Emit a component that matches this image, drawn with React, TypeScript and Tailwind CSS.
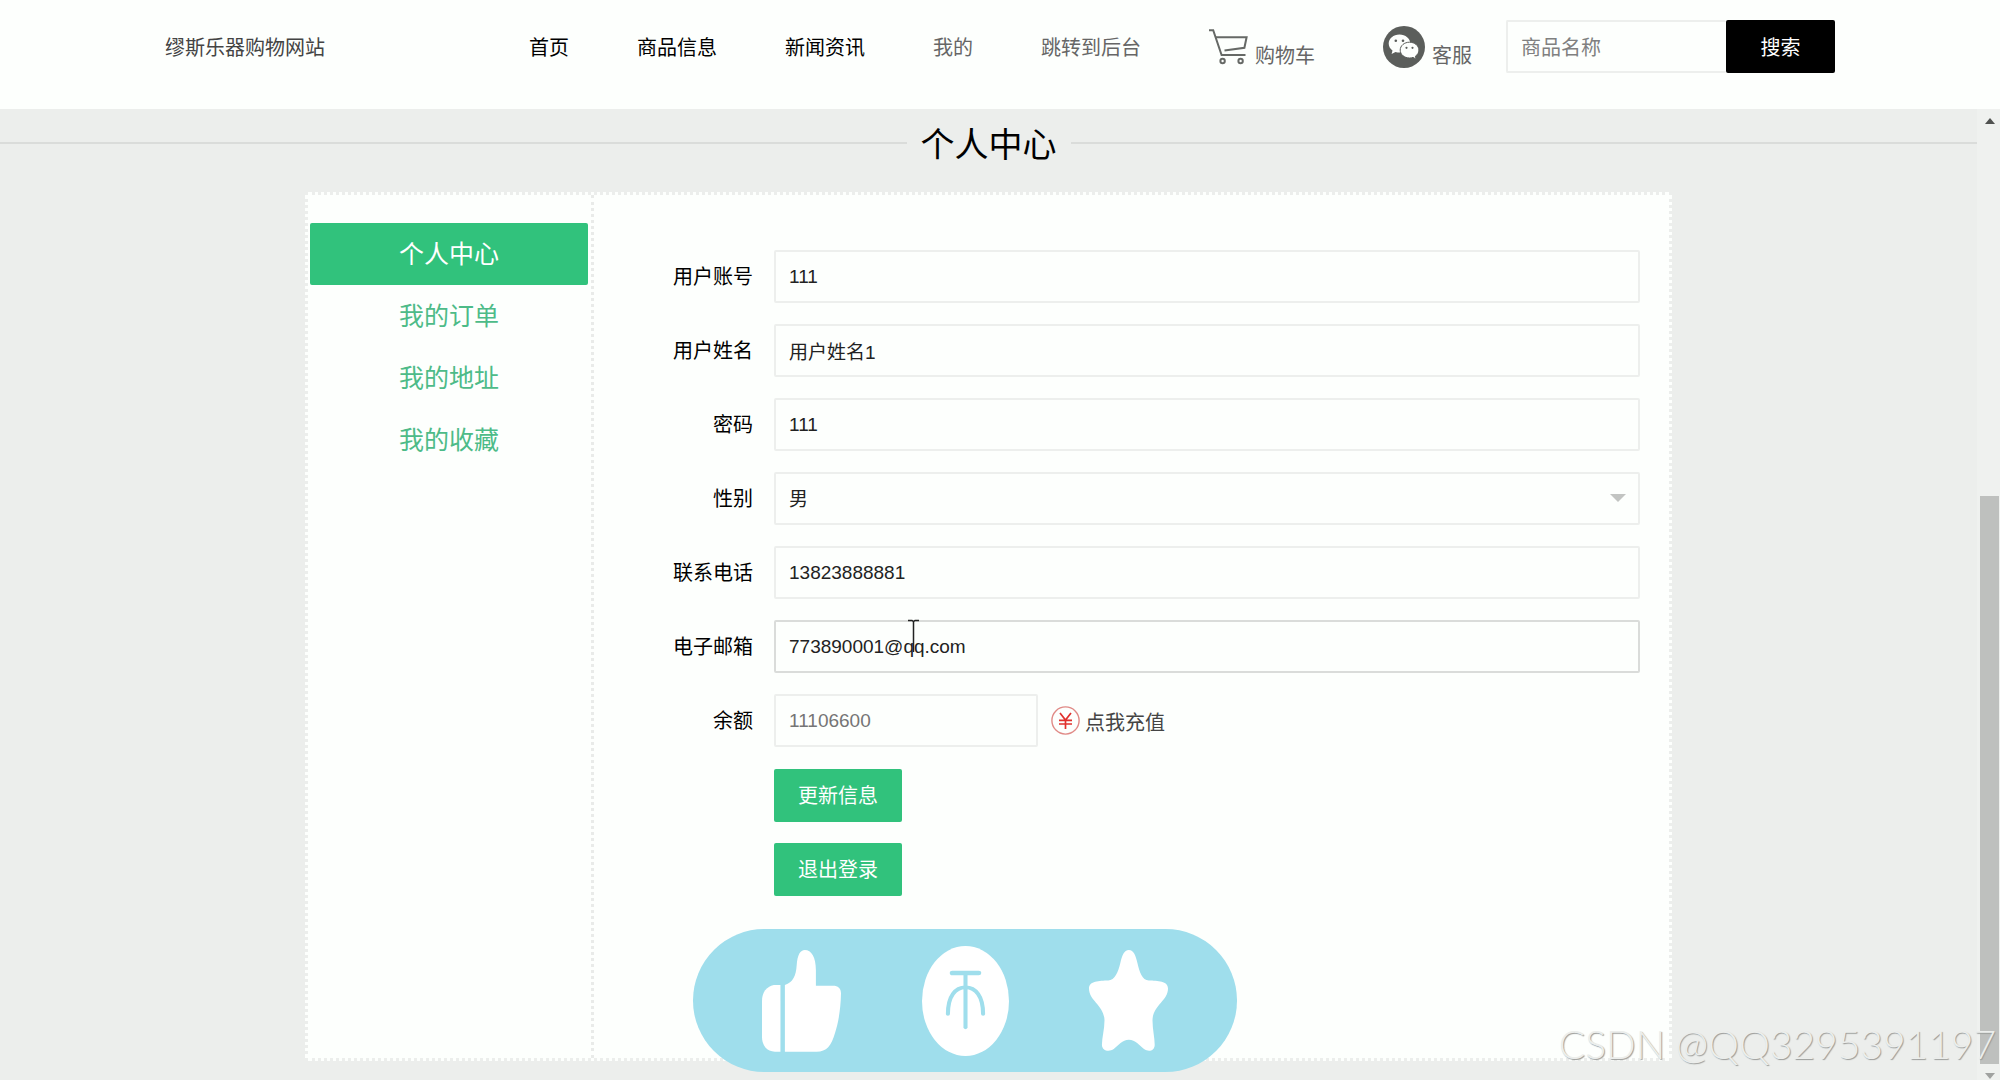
import React from 'react';
import { clsx } from 'clsx';

interface NavItem {
  label: string;
  strong?: boolean;
}

interface Field {
  id: string;
  label: string;
  value: string;
  active?: boolean;
}

const navItems: NavItem[] = [
  { label: '首页', strong: true },
  { label: '商品信息', strong: true },
  { label: '新闻资讯', strong: true },
  { label: '我的' },
  { label: '跳转到后台' },
];

const menuItems = ['个人中心', '我的订单', '我的地址', '我的收藏'];

const accountFields: Field[] = [
  { id: 'account', label: '用户账号', value: '111' },
  { id: 'username', label: '用户姓名', value: '用户姓名1' },
  { id: 'password', label: '密码', value: '111' },
];

const contactFields: Field[] = [
  { id: 'phone', label: '联系电话', value: '13823888881' },
  { id: 'email', label: '电子邮箱', value: '773890001@qq.com', active: true },
];

const inputClass = 'h-[53px] rounded-xs border-2 bg-transparent px-[13px] text-[19px] outline-none';

function CartIcon() {
  return (
    <svg width="39" height="36" viewBox="0 0 39 36" fill="none" stroke="#666966" strokeWidth="2">
      <path d="M0 1.2H4.2L12.6 26H36.5" />
      <path d="M6 8.2H37.6L35.4 18.8L15.5 21.4" />
      <circle cx="13.6" cy="32" r="2.2" />
      <circle cx="31.6" cy="32" r="2.2" />
    </svg>
  );
}

function WechatIcon() {
  return (
    <svg width="42" height="42" viewBox="0 0 42 42">
      <circle cx="21" cy="21" r="21" fill="#5b5e5b" />
      <path
        d="M16.5 8.5C10.3 8.5 5.7 12.5 5.7 17.6C5.7 20.5 7.1 22.9 9.5 24.6L8.6 28L12.5 26C13.8 26.4 15.1 26.6 16.5 26.6C22.5 26.6 27.3 22.7 27.3 17.6S22.500 8.500 16.500 8.500Z"
        fill="#fdfffd"
      />
      <path
        d="M26.5 16.2C21.3 16.2 17.2 19.7 17.2 24.1S21.3 32 26.5 32C27.7 32 28.9 31.8 30 31.4L33.2 33.2L32.4 30.2C34.6 28.8 35.9 26.6 35.9 24.1C35.9 19.7 31.700 16.200 26.500 16.200Z"
        fill="#fdfffd"
        stroke="#5b5e5b"
      />
      <g fill="#5b5e5b">
        <circle cx="12.8" cy="14.8" r="1.3" />
        <circle cx="20" cy="14.8" r="1.3" />
        <circle cx="23.5" cy="21.8" r="1.1" />
        <circle cx="29.5" cy="21.8" r="1.1" />
      </g>
    </svg>
  );
}

function YuanIcon() {
  return (
    <svg width="29" height="29" viewBox="0 0 29 29" fill="none">
      <circle cx="14.5" cy="14.5" r="13.6" stroke="#e08a86" strokeWidth="1.4" />
      <path d="M9 7L14.5 14L20 7M14.5 14V23M8 14.3H21M8 18H21" stroke="#e0302c" strokeWidth="1.7" />
    </svg>
  );
}

function ThumbIcon() {
  return (
    <svg width="79" height="102" viewBox="0 0 214 306" preserveAspectRatio="none" fill="#fff">
      <path d="M50 105H32C12 109 0 128 0 152V262C0 286 13 305 35 305H50Z" />
      <path d="M62 305V105C84 97 92 78 94 45C96 14 104 0 116 0C134 0 146 22 146 60V107H192C206 107 214 115 214 130C213 185 205 225 198 248C188 287 175 305 148 305Z" />
    </svg>
  );
}

function CoinIcon() {
  return (
    <svg width="87" height="110" viewBox="0 0 235 330" preserveAspectRatio="none">
      <ellipse cx="117.5" cy="165" rx="117.5" ry="165" fill="#fff" />
      <g fill="none" stroke="#9fdeec" strokeLinecap="round">
        <path d="M82 81H153" strokeWidth="14" />
        <path d="M117.5 84V244" strokeWidth="11" />
        <path d="M70 204C70 150 90 124 117.5 124S165 150 165 204" strokeWidth="11" />
      </g>
    </svg>
  );
}

function StarIcon() {
  return (
    <svg width="79" height="101" viewBox="0 0 214 302" preserveAspectRatio="none" fill="#fff">
      <path d="M108 0C121 0 127 18 131 38C137 66 144 90 162 91C186 92 214 92 214 115C214 152 173 165 172 210C172 238 178 262 178 283C178 301 162 306 149 296C136 284 126 268 108 268S80 284 67 296C54 306 35 301 35 283C35 262 42 238 42 210C41 165 0 152 0 115C0 92 28 92 52 91C70 90 79 66 85 38C89 18 95 0 108 0Z" />
    </svg>
  );
}

function FormRow({ id, label, children }: { id: string; label: string; children: React.ReactNode }) {
  return (
    <div className="flex items-center">
      <label htmlFor={id} className="w-[180px] shrink-0 pr-[21px] text-right text-[20px] text-black">
        {label}
      </label>
      {children}
    </div>
  );
}

function TextRow({ field }: { field: Field }) {
  return (
    <FormRow id={field.id} label={field.label}>
      <input
        id={field.id}
        type="text"
        defaultValue={field.value}
        className={clsx(
          inputClass,
          'min-w-0 flex-1 text-[#222]',
          field.active ? 'border-[#dadcda]' : 'border-[#edefed]'
        )}
      />
    </FormRow>
  );
}

function Header() {
  return (
    <header className="h-[109px] shrink-0 bg-[#fdfffd]">
      <div className="mx-auto flex max-w-[1670px] items-start justify-between pt-[20px] text-[20px] text-[#666]">
        <a href="#" className="leading-[57px] text-[#444]">
          缪斯乐器购物网站
        </a>
        <div className="flex items-start gap-[34px]">
          <nav className="flex items-start gap-[68px] whitespace-nowrap leading-[57px]">
            {navItems.map((item) => (
              <a key={item.label} href="#" className={clsx(item.strong && 'text-black')}>
                {item.label}
              </a>
            ))}
            <a href="#" className="flex h-[53px] items-center gap-[7px]">
              <CartIcon />
              <span className="pt-[18px] leading-[24px]">购物车</span>
            </a>
            <a href="#" className="flex h-[53px] items-center gap-[7px]">
              <WechatIcon />
              <span className="pt-[18px] leading-[24px]">客服</span>
            </a>
          </nav>
          <form className="flex" onSubmit={(e) => e.preventDefault()}>
            <input
              type="search"
              aria-label="商品名称"
              placeholder="商品名称"
              className="h-[53px] w-[220px] rounded-xs border-2 border-r-0 border-[#edefed] bg-transparent px-[13px] pt-[3px] text-[20px] outline-none placeholder:text-[#808080]"
            />
            <button type="submit" className="h-[53px] w-[109px] rounded-xs bg-black pt-[2px] text-[20px] text-white">
              搜索
            </button>
          </form>
        </div>
      </div>
    </header>
  );
}

function Sidebar() {
  return (
    <aside className="w-[286px] shrink-0 border-r-[3px] border-dotted border-[#e9ebe9] pt-7 pr-[3px] pl-[2px]">
      <ul>
        {menuItems.map((item, index) => (
          <li key={item}>
            <a
              href="#"
              className={clsx(
                'block text-center text-[25px] leading-[62px]',
                index === 0 ? 'rounded-xs bg-[#31c27c] text-white' : 'text-[#4dbb88]'
              )}
            >
              {item}
            </a>
          </li>
        ))}
      </ul>
    </aside>
  );
}

function ProfileForm() {
  return (
    <form className="flex flex-1 flex-col gap-[21px] pt-[55px] pr-[29px]" onSubmit={(e) => e.preventDefault()}>
      {accountFields.map((field) => (
        <TextRow key={field.id} field={field} />
      ))}
      <FormRow id="gender" label="性别">
        <div className="relative min-w-0 flex-1">
          <select
            id="gender"
            defaultValue="男"
            className={clsx(inputClass, 'w-full appearance-none border-[#edefed] pt-[3px] text-[#222]')}
          >
            <option>男</option>
            <option>女</option>
          </select>
          <svg className="pointer-events-none absolute top-[22px] right-[14px]" width="16" height="8" viewBox="0 0 16 8">
            <path d="M0 0H16L8 8Z" fill="#c2c4c2" />
          </svg>
        </div>
      </FormRow>
      {contactFields.map((field) => (
        <TextRow key={field.id} field={field} />
      ))}
      <FormRow id="balance" label="余额">
        <input
          id="balance"
          type="text"
          readOnly
          defaultValue="11106600"
          className={clsx(inputClass, 'w-[264px] border-[#edefed] text-[#757575]')}
        />
        <a href="#" className="ml-[13px] flex items-center gap-[5px] text-[20px] text-[#444]">
          <YuanIcon />
          <span className="pt-1">点我充值</span>
        </a>
      </FormRow>
      <div className="flex flex-col items-start gap-[21px] pt-px pl-[180px]">
        <button type="submit" className="h-[53px] w-[128px] rounded-xs bg-[#31c27c] text-[20px] text-white">
          更新信息
        </button>
        <button type="button" className="h-[53px] w-[128px] rounded-xs bg-[#31c27c] text-[20px] text-white">
          退出登录
        </button>
      </div>
    </form>
  );
}

function Scrollbar() {
  return (
    <div aria-hidden="true" className="flex w-[23px] shrink-0 flex-col items-center bg-[#eff1ef] pl-[2px]">
      <svg className="my-[9px] shrink-0" width="10" height="6" viewBox="0 0 10 6">
        <path d="M5 0L10 6H0Z" fill="#505250" />
      </svg>
      <div className="flex min-h-0 w-full flex-1 flex-col justify-end px-px">
        <div className="h-[61%] bg-[#bec0be]" />
      </div>
      <svg className="mt-[9px] mb-px shrink-0" width="10" height="6" viewBox="0 0 10 6">
        <path d="M0 0H10L5 6Z" fill="#a0a2a0" />
      </svg>
    </div>
  );
}

export default function App() {
  return (
    <div className="relative flex h-screen flex-col overflow-hidden bg-[#eceeec] font-['Liberation_Sans','Noto_Sans_CJK_SC',sans-serif]">
      <Header />
      <div className="flex min-h-0 flex-1">
        <main className="flex flex-1 flex-col pt-[8px] pb-[19px]">
          <div className="mb-[23px] flex items-center gap-[14px]">
            <div className="h-[2px] flex-1 bg-[#dadcda]" />
            <h1 className="pt-1 text-[34px] leading-[48px] text-black">个人中心</h1>
            <div className="h-[2px] flex-1 bg-[#dadcda]" />
          </div>
          <section className="mx-auto flex w-full max-w-[1367px] flex-1 border-[3px] border-dotted border-[#eceeec] bg-[#fdfffd]">
            <Sidebar />
            <ProfileForm />
          </section>
        </main>
        <Scrollbar />
      </div>

      <div className="absolute bottom-2 left-[693px] flex h-[143px] w-[544px] items-center justify-between rounded-full bg-[#9fdeec] px-[69px]">
        <button type="button" aria-label="点赞">
          <ThumbIcon />
        </button>
        <button type="button" aria-label="投币">
          <CoinIcon />
        </button>
        <button type="button" aria-label="收藏">
          <StarIcon />
        </button>
      </div>

      {/* text cursor over the email field */}
      <svg
        className="pointer-events-none absolute top-[619px] left-[908px]"
        width="11"
        height="36"
        viewBox="0 0 11 36"
        fill="none"
        stroke="#222"
        strokeWidth="1.5"
      >
        <path d="M0 1.5H4L5.5 2.5L7 1.5H11M5.5 2.5V33" />
      </svg>

      <p className="pointer-events-none absolute right-[4px] bottom-[12px] font-['Lato',sans-serif] text-[39px] leading-[48px] font-light whitespace-nowrap text-[#eceeec] [text-shadow:1px_1px_1px_#9a9c9a]">
        CSDN @QQ3295391197
      </p>
    </div>
  );
}
